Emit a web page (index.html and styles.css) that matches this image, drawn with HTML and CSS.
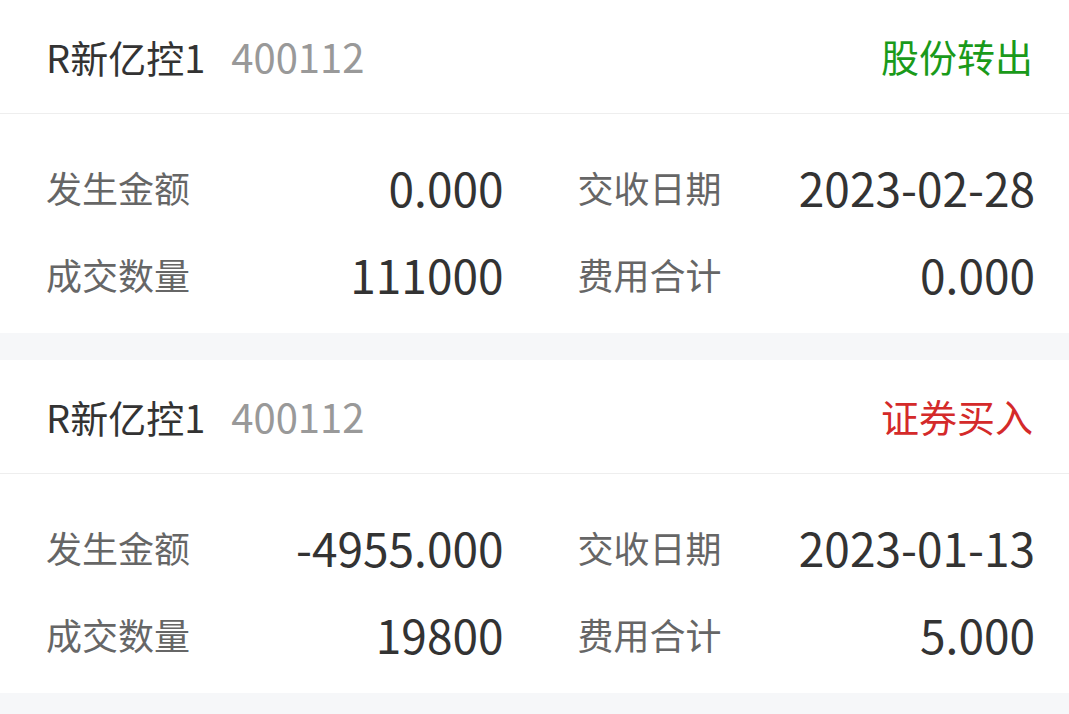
FILE: index.html
```html
<!DOCTYPE html>
<html lang="zh-CN">
<head>
    <meta charset="UTF-8">
    <meta name="viewport" content="width=device-width, initial-scale=1.0">
    <title>交割单</title>
    <link rel="stylesheet" href="styles.css">
</head>
<body>
    <div class="list">
        <div class="card">
            <div class="card-head">
                <div class="stock">
                    <span class="stock-name">R新亿控1</span>
                    <span class="stock-code">400112</span>
                </div>
                <span class="trade-type out">股份转出</span>
            </div>
            <div class="card-body">
                <div class="cell"><span class="label">发生金额</span><span class="value">0.000</span></div>
                <div class="cell"><span class="label">交收日期</span><span class="value">2023-02-28</span></div>
                <div class="cell"><span class="label">成交数量</span><span class="value">111000</span></div>
                <div class="cell"><span class="label">费用合计</span><span class="value">0.000</span></div>
            </div>
        </div>

        <div class="card">
            <div class="card-head">
                <div class="stock">
                    <span class="stock-name">R新亿控1</span>
                    <span class="stock-code">400112</span>
                </div>
                <span class="trade-type buy">证券买入</span>
            </div>
            <div class="card-body">
                <div class="cell"><span class="label">发生金额</span><span class="value">-4955.000</span></div>
                <div class="cell"><span class="label">交收日期</span><span class="value">2023-01-13</span></div>
                <div class="cell"><span class="label">成交数量</span><span class="value">19800</span></div>
                <div class="cell"><span class="label">费用合计</span><span class="value">5.000</span></div>
            </div>
        </div>
    </div>
</body>
</html>
```

FILE: styles.css
```css
body {
    margin: 0;
    font-family: "Noto Sans CJK SC", "Noto Sans", sans-serif;
    background-color: #f6f7f9;
    color: #333;
}
.list {
    display: flex;
    flex-direction: column;
    gap: 27px;
}
.card {
    background-color: #fff;
}
.card-head {
    height: 113px;
    display: flex;
    align-items: center;
    justify-content: space-between;
    padding: 0 36px 2px 46px;
    border-bottom: 1px solid #eeeeee;
    box-sizing: border-box;
    height: 114px;
}
.stock {
    display: flex;
    align-items: baseline;
}
.stock-name {
    font-size: 38px;
    color: #333;
}
.stock-code {
    font-size: 40px;
    color: #999;
    margin-left: 26px;
}
.trade-type {
    font-size: 38px;
}
.trade-type.out {
    color: #1a9a1a; /* 转出 green */
}
.trade-type.buy {
    color: #d42a2a; /* 买入 red */
}
.card-body {
    display: grid;
    grid-template-columns: 1fr 1fr;
    column-gap: 74px;
    padding: 29px 34px 16px 46px;
}
.cell {
    height: 87px;
    display: flex;
    align-items: center;
    justify-content: space-between;
}
.label {
    font-size: 36px;
    color: #666;
}
.value {
    font-size: 46px;
    color: #333;
}
```
